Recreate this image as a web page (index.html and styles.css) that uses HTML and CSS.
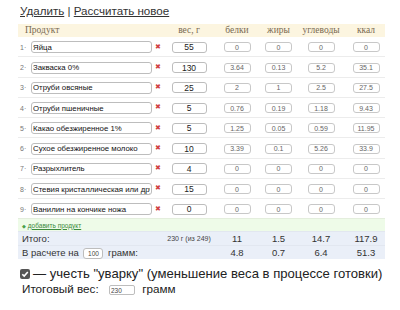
FILE: index.html
```html
<!DOCTYPE html>
<html>
<head>
<meta charset="utf-8">
<link rel="stylesheet" href="styles.css">
</head>
<body>
<div class="page">
  <div class="actions"><a href="#">Удалить</a> | <a href="#">Рассчитать новое</a></div>
  <table class="calc">
    <colgroup>
      <col class="c-name"><col class="c-del"><col class="c-w"><col class="c-p"><col class="c-f"><col class="c-c"><col class="c-k">
    </colgroup>
    <thead>
      <tr><th class="th-name">Продукт</th><th></th><th>вес, г</th><th>белки</th><th>жиры</th><th>углеводы</th><th>ккал</th></tr>
    </thead>
    <tbody>
      <tr><td class="name"><span class="num">1·</span><input class="in-name" value="Яйца"></td><td class="del">✖</td><td><input class="in-w" value="55"></td><td><input class="in-n" value="0"></td><td><input class="in-n" value="0"></td><td><input class="in-n" value="0"></td><td><input class="in-n" value="0"></td></tr>
      <tr><td class="name"><span class="num">2·</span><input class="in-name" value="Закваска 0%"></td><td class="del">✖</td><td><input class="in-w" value="130"></td><td><input class="in-n" value="3.64"></td><td><input class="in-n" value="0.13"></td><td><input class="in-n" value="5.2"></td><td><input class="in-n" value="35.1"></td></tr>
      <tr><td class="name"><span class="num">3·</span><input class="in-name" value="Отруби овсяные"></td><td class="del">✖</td><td><input class="in-w" value="25"></td><td><input class="in-n" value="2"></td><td><input class="in-n" value="1"></td><td><input class="in-n" value="2.5"></td><td><input class="in-n" value="27.5"></td></tr>
      <tr><td class="name"><span class="num">4·</span><input class="in-name" value="Отруби пшеничные"></td><td class="del">✖</td><td><input class="in-w" value="5"></td><td><input class="in-n" value="0.76"></td><td><input class="in-n" value="0.19"></td><td><input class="in-n" value="1.18"></td><td><input class="in-n" value="9.43"></td></tr>
      <tr><td class="name"><span class="num">5·</span><input class="in-name" value="Какао обезжиренное 1%"></td><td class="del">✖</td><td><input class="in-w" value="5"></td><td><input class="in-n" value="1.25"></td><td><input class="in-n" value="0.05"></td><td><input class="in-n" value="0.59"></td><td><input class="in-n" value="11.95"></td></tr>
      <tr><td class="name"><span class="num">6·</span><input class="in-name" value="Сухое обезжиренное молоко"></td><td class="del">✖</td><td><input class="in-w" value="10"></td><td><input class="in-n" value="3.39"></td><td><input class="in-n" value="0.1"></td><td><input class="in-n" value="5.26"></td><td><input class="in-n" value="33.9"></td></tr>
      <tr><td class="name"><span class="num">7·</span><input class="in-name" value="Разрыхлитель"></td><td class="del">✖</td><td><input class="in-w" value="4"></td><td><input class="in-n" value="0"></td><td><input class="in-n" value="0"></td><td><input class="in-n" value="0"></td><td><input class="in-n" value="0"></td></tr>
      <tr><td class="name"><span class="num">8·</span><input class="in-name" value="Стевия кристаллическая или другой"></td><td class="del">✖</td><td><input class="in-w" value="15"></td><td><input class="in-n" value="0"></td><td><input class="in-n" value="0"></td><td><input class="in-n" value="0"></td><td><input class="in-n" value="0"></td></tr>
      <tr><td class="name"><span class="num">9·</span><input class="in-name" value="Ванилин на кончике ножа"></td><td class="del">✖</td><td><input class="in-w" value="0"></td><td><input class="in-n" value="0"></td><td><input class="in-n" value="0"></td><td><input class="in-n" value="0"></td><td><input class="in-n" value="0"></td></tr>
      <tr class="add"><td colspan="7"><span class="bullet">◆</span> <a href="#">добавить продукт</a></td></tr>
      <tr class="tot"><td colspan="2" class="lbl">Итого:</td><td class="small">230 г (из 249)</td><td>11</td><td>1.5</td><td>14.7</td><td>117.9</td></tr>
      <tr class="tot"><td colspan="2" class="lbl">В расчете на <input class="in-per" value="100"> грамм:</td><td></td><td>4.8</td><td>0.7</td><td>6.4</td><td>51.3</td></tr>
    </tbody>
  </table>
  <div class="opt"><span class="chk"><svg width="10" height="10" viewBox="0 0 10 10"><path d="M2.3 5.2 L4.2 7.1 L7.8 2.9" fill="none" stroke="#fff" stroke-width="1.6"/></svg></span> — учесть "уварку" (уменьшение веса в процессе готовки)</div>
  <div class="final">Итоговый вес: <input class="in-final" value="230"> грамм</div>
</div>
</body>
</html>
```

FILE: styles.css
```css
html, body { margin: 0; padding: 0; background: #fff; }
body { font-family: "Liberation Sans", Arial, sans-serif; color: #222; }
.page { padding: 4px 10px 0 18px; }
.actions { font-size: 11.6px; line-height: 14px; padding-left: 2px; color: #333; margin-bottom: 6px; }
.actions a { color: #333; text-decoration: underline; }
.calc { border-collapse: collapse; table-layout: fixed; width: 367px; }
.c-name { width: 132px; } .c-del { width: 16px; } .c-w { width: 46px; } .c-p { width: 50px; }
.c-f { width: 33px; } .c-c { width: 52px; } .c-k { width: 38px; }
.calc th { background: #fcf5e0; font-family: "Liberation Serif", "Times New Roman", serif; font-weight: normal; font-size: 9.5px; color: #7a6a50; height: 13px; padding: 0; text-align: center; line-height: 13px; }
.calc th.th-name { text-align: left; padding-left: 7px; }
.calc tbody td { padding: 0; text-align: center; height: 19.25px; border-top: 1px solid #ececec; vertical-align: middle; }
.calc tbody tr:first-child td { border-top: none; }
.name { text-align: left !important; white-space: nowrap; }
.num { display: inline-block; width: 11px; font-size: 7px; color: #777; padding-left: 2px; vertical-align: middle; }
input { font-family: "Liberation Sans", Arial, sans-serif; border: 1px solid #bdbdbd; border-radius: 3px; box-sizing: border-box; padding: 0 1px; margin: 0; vertical-align: middle; background: #fff; }
.in-name { width: 121px; height: 12px; font-size: 7.8px; color: #111; }
.del { color: #d04040; font-size: 7px; }
.in-w { width: 35px; height: 11px; font-size: 8.5px; text-align: center; color: #222; }
.in-n { width: 27px; height: 10px; font-size: 7px; text-align: center; color: #666; border-color: #c8c8c8; }
.calc tr.add td { background: #eefbe8; height: 12px; text-align: left; padding-left: 4px; font-size: 6.5px; border-top: 1px solid #e4eedd; }
.add a { color: #3c8a3c; text-decoration: underline; }
.bullet { color: #4aa04a; font-size: 5px; }
.calc tr.tot td { background: #eaeff8; height: 13px; font-size: 9.5px; color: #333; border-top: 1px solid #e2e7f0; }
.calc tr.tot td.lbl { text-align: left; padding-left: 4px; white-space: nowrap; }
.calc tr.tot td.small { font-size: 7px; color: #444; white-space: nowrap; }
.in-per { width: 20px; height: 11px; font-size: 6.5px; text-align: center; color: #444; margin: 0 2px; }
.opt { font-size: 13.1px; line-height: 15px; color: #222; margin-top: 7px; padding-left: 2px; display: flex; align-items: center; white-space: nowrap; }
.chk { display: inline-flex; width: 10px; height: 10px; background: #555; border-radius: 2px; margin-right: 3px; }
.final { font-size: 11.7px; line-height: 15px; color: #222; margin-top: 0; padding-left: 4px; }
.in-final { width: 26px; height: 10px; font-size: 6.5px; color: #444; margin: 0 4px 0 7px; border-radius: 2px; }
```
